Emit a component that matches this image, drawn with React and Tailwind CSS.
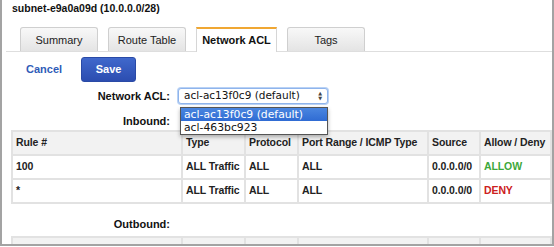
import React from 'react';

const columns = [
    { label: 'Rule #', w: 'w-[170px]' },
    { label: 'Type', w: 'w-[63px]' },
    { label: 'Protocol', w: 'w-[53px]' },
    { label: 'Port Range / ICMP Type', w: 'w-[130px]' },
    { label: 'Source', w: 'w-[52px]' },
    { label: 'Allow / Deny', w: 'w-[71px]' },
];

const inbound = [
    { rule: '100', type: 'ALL Traffic', protocol: 'ALL', port: 'ALL', source: '0.0.0.0/0', action: 'ALLOW' },
    { rule: '*', type: 'ALL Traffic', protocol: 'ALL', port: 'ALL', source: '0.0.0.0/0', action: 'DENY' },
];

const cell = 'border-2 border-[#e2e2e2] px-[3px] whitespace-nowrap overflow-hidden';

function RulesTable({ rows }) {
    return (
        <table className="ml-[9px] w-[539px] table-fixed border-collapse text-[10.5px] font-bold tracking-[-0.1px] text-[#222]">
            <thead>
                <tr className="h-[24px] bg-[#f2f2f2]">
                    {columns.map((c) => (
                        <th key={c.label} className={`${c.w} ${cell} text-left font-bold`}>
                            {c.label}
                        </th>
                    ))}
                </tr>
            </thead>
            <tbody>
                {rows.map((r) => (
                    <tr key={r.rule} className="h-[24px] bg-white">
                        <td className={cell}>{r.rule}</td>
                        <td className={cell}>{r.type}</td>
                        <td className={cell}>{r.protocol}</td>
                        <td className={cell}>{r.port}</td>
                        <td className={cell}>{r.source}</td>
                        <td className={`${cell} ${r.action === 'ALLOW' ? 'text-[#3da83a]' : 'text-[#cc2020]'}`}>
                            {r.action}
                        </td>
                    </tr>
                ))}
            </tbody>
        </table>
    );
}

function Tab({ label, active, width }) {
    if (active) {
        return (
            <div className={`${width} -mb-px flex h-[25px] items-center justify-center border-x border-t-2 border-x-[#d6d6d6] border-t-[#f0a733] bg-white text-[11px] font-bold text-[#111]`}>
                {label}
            </div>
        );
    }
    return (
        <div className={`${width} flex h-[24px] items-center justify-center rounded-t-[3px] border border-b-0 border-[#cfcfcf] bg-gradient-to-b from-[#f8f8f8] to-[#e4e4e4] pt-[2px] text-[11px] text-[#222]`}>
            {label}
        </div>
    );
}

export default function App() {
    return (
        <div className="h-[247px] w-[554px] overflow-hidden bg-white font-['Liberation_Sans',Arial,sans-serif]">
            <div className="relative h-[246px] w-[554px] overflow-hidden border-x-2 border-b-2 border-[#a3a3a3]">
                <div className="pl-[10px] pt-[1px] text-[10.5px] font-bold leading-[14px] text-[#111]">
                    subnet-e9a0a09d (10.0.0.0/28)
                </div>

                {/* tabs */}
                <div className="ml-[4px] mt-[13px] flex h-[24px] items-end gap-[10px] border-b border-[#dedede] pl-[14px]">
                    <Tab label="Summary" width="w-[78px]" />
                    <Tab label="Route Table" width="w-[78px]" />
                    <Tab label="Network ACL" width="w-[81px]" active />
                    <Tab label="Tags" width="w-[78px]" />
                </div>

                {/* actions */}
                <div className="mt-[5px] flex items-center">
                    <button className="ml-[24px] text-[11px] font-bold text-[#2f5cb8]">Cancel</button>
                    <button className="ml-[19px] h-[25px] w-[55px] rounded-[3px] border border-[#2a4aa6] bg-gradient-to-b from-[#4068cc] to-[#2c4db0] text-[11px] font-bold text-white">
                        Save
                    </button>
                </div>

                {/* network acl select */}
                <div className="mt-[6px] flex h-[16px] items-center">
                    <div className="w-[168px] text-right text-[11px] font-bold text-[#111]">Network ACL:</div>
                    <div className="ml-[8px] flex h-[16px] w-[150px] items-center justify-between rounded-[3px] border border-[#8fb4ec] bg-white pl-[5px] pr-[5px] font-['DejaVu_Sans',sans-serif] text-[10.5px] text-[#111] shadow-[0_0_0_1px_#b9d2f5]">
                        <span>acl-ac13f0c9 (default)</span>
                        <span className="flex flex-col text-[5px] leading-[5px] text-[#444]">
                            <span>▲</span>
                            <span>▼</span>
                        </span>
                    </div>
                </div>

                <div className="mt-[9px] flex h-[16px] items-center">
                    <div className="w-[168px] text-right text-[11px] font-bold text-[#111]">Inbound:</div>
                </div>

                <div className="mt-[1px]">
                    <RulesTable rows={inbound} />
                </div>

                <div className="mt-[12px] flex h-[16px] items-center">
                    <div className="w-[168px] text-right text-[11px] font-bold text-[#111]">Outbound:</div>
                </div>

                <div className="mt-[4px]">
                    <RulesTable rows={[]} />
                </div>

                {/* open dropdown list */}
                <div className="absolute left-[178px] top-[107px] w-[148px] border border-[#555] bg-white font-['DejaVu_Sans',sans-serif] text-[10.8px] leading-[13px] text-[#111] shadow-[0_2px_4px_rgba(0,0,0,0.3)]">
                    <div className="bg-gradient-to-b from-[#4a86e0] to-[#2f6bd3] pl-[3px] text-white">acl-ac13f0c9 (default)</div>
                    <div className="pl-[3px]">acl-463bc923</div>
                </div>
            </div>
        </div>
    );
}
